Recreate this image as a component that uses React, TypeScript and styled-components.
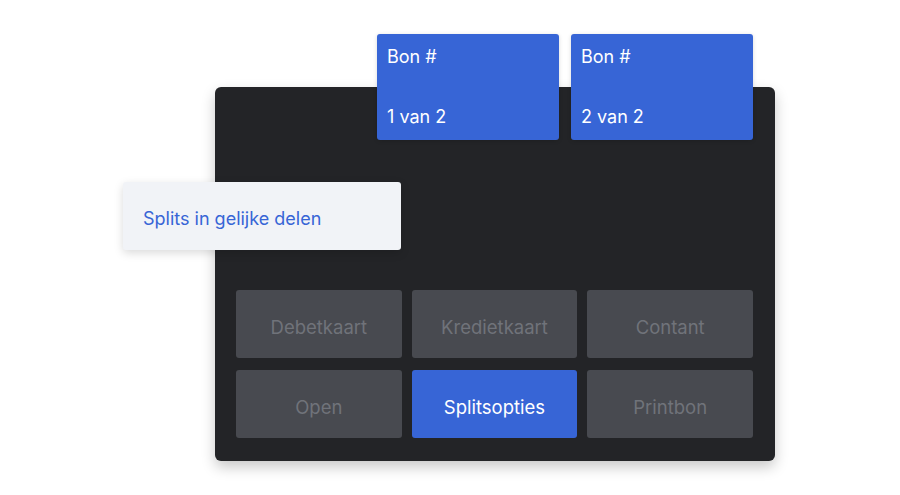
import React from "react";
import styled, { createGlobalStyle } from "styled-components";

const GlobalStyle = createGlobalStyle`
    html, body {
        margin: 0;
        padding: 0;
        background: #ffffff;
        font-family: Inter, "Noto Sans", sans-serif;
    }
`;

type Method = { label: string, active?: boolean };

const methods: Method[] = [
    { label: "Debetkaart" },
    { label: "Kredietkaart" },
    { label: "Contant" },
    { label: "Open" },
    { label: "Splitsopties", active: true },
    { label: "Printbon" }
];

const receipts = ["1 van 2", "2 van 2"];

export default () => {
    return (
        <Host>
            <GlobalStyle/>
            <Panel>
                <ReceiptRow>
                    {receipts.map(x =>
                        <Receipt key={x}>
                            <span>Bon #</span>
                            <span>{x}</span>
                        </Receipt>
                    )}
                </ReceiptRow>
                <SplitCard>Splits in gelijke delen</SplitCard>
                <ButtonGrid>
                    {methods.map(x =>
                        <MethodButton key={x.label} $active={x.active}>
                            {x.label}
                        </MethodButton>
                    )}
                </ButtonGrid>
            </Panel>
        </Host>
    );
};

const Host = styled.div`
    width: 900px;
    height: 495px;
    box-sizing: border-box;
    padding: 87px 0 0 215px;
    overflow: hidden;
`;

const Panel = styled.div`
    position: relative;
    width: 560px;
    height: 374px;
    box-sizing: border-box;
    padding: 0 22px 23px 21px;
    display: flex;
    flex-direction: column;
    justify-content: flex-end;
    background-color: #232427;
    border-radius: 6px;
    box-shadow: 0 6px 14px rgba(0, 0, 0, 0.22);
`;

const ReceiptRow = styled.div`
    position: absolute;
    top: -53px;
    left: 162px;
    display: flex;
    gap: 12px;
`;

const Receipt = styled.div`
    width: 182px;
    height: 106px;
    box-sizing: border-box;
    padding: 12px 10px 12px;
    display: flex;
    flex-direction: column;
    justify-content: space-between;
    background-color: #3765d6;
    border-radius: 3px;
    color: #ffffff;
    font-size: 18px;
    line-height: 22px;
    box-shadow: 0 1px 4px rgba(0, 0, 0, 0.15);
`;

const SplitCard = styled.div`
    position: absolute;
    top: 95px;
    left: -92px;
    width: 278px;
    height: 68px;
    box-sizing: border-box;
    padding: 4px 20px 0;
    display: flex;
    align-items: center;
    background-color: #f1f3f7;
    border-radius: 3px;
    color: #3765d6;
    font-size: 18px;
    box-shadow: 0 3px 10px rgba(0, 0, 0, 0.15);
`;

const ButtonGrid = styled.div`
    display: grid;
    grid-template-columns: repeat(3, 1fr);
    column-gap: 10px;
    row-gap: 12px;
`;

const MethodButton = styled.div<{ $active?: boolean }>`
    height: 68px;
    box-sizing: border-box;
    padding-top: 5px;
    display: flex;
    align-items: center;
    justify-content: center;
    border-radius: 3px;
    font-size: 18.5px;
    background-color: ${p => p.$active ? "#3765d6" : "#484a50"};
    color: ${p => p.$active ? "#ffffff" : "#70737a"};
`;
